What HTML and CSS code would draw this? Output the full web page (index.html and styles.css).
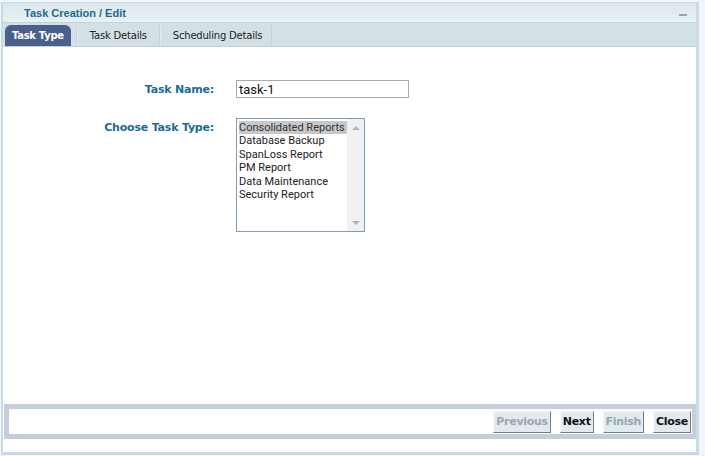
FILE: index.html
```html
<!DOCTYPE html>
<html lang="en">
<head>
    <meta charset="UTF-8">
    <title>Task Creation / Edit</title>
    <link rel="stylesheet" href="styles.css">
</head>
<body>
    <div class="panel">
        <div class="titleBar">
            <span class="titleText">Task Creation / Edit</span>
            <span class="minBtn"></span>
        </div>
        <div class="tabBar">
            <div class="tab active">Task Type</div>
            <div class="tab">Task Details</div>
            <div class="tab">Scheduling Details</div>
        </div>
        <div class="content">
            <div class="formRow">
                <label class="formLabel">Task Name:</label>
                <input class="taskName" type="text" value="task-1">
            </div>
            <div class="formRow">
                <label class="formLabel">Choose Task Type:</label>
                <div class="listBox">
                    <ul class="options">
                        <li class="selected">Consolidated Reports</li>
                        <li>Database Backup</li>
                        <li>SpanLoss Report</li>
                        <li>PM Report</li>
                        <li>Data Maintenance</li>
                        <li>Security Report</li>
                    </ul>
                    <div class="scrollBar">
                        <span class="arrowUp"></span>
                        <span class="arrowDown"></span>
                    </div>
                </div>
            </div>
        </div>
        <div class="footer">
            <div class="footerInner">
                <button class="btn disabled">Previous</button>
                <button class="btn">Next</button>
                <button class="btn disabled">Finish</button>
                <button class="btn">Close</button>
            </div>
        </div>
        <div class="bottomSpace"></div>
    </div>
</body>
</html>
```
FILE: styles.css
```css
body{
    margin: 0;
    background-color: #f3f6f8;
    font-family: "DejaVu Sans", Verdana, sans-serif;
}
.panel{
    width: 693px;
    margin: 2px 0 0 1px;
    background-color: #ffffff;
    border: 1px solid #c9dbe2;
    border-left-width: 2px;
    border-right-width: 3px;
    border-bottom-width: 3px;
}
.titleBar{
    height: 19px;
    display: flex;
    align-items: center;
    justify-content: space-between;
    padding: 0 9px 0 21px;
    background: linear-gradient(#dce8ee, #e8f0f3);
    border-bottom: 1px solid #c2d3da;
}
.titleText{
    font-family: "Liberation Sans", Arial, sans-serif;
    font-size: 11px;
    font-weight: bold;
    color: #1f6b8b;
}
.minBtn{
    width: 8px;
    height: 2px;
    margin-top: 4px;
    background-color: #9ea5aa;
}
.tabBar{
    height: 23px;
    display: flex;
    align-items: flex-end;
    padding-left: 2px;
    background-color: #d3e1e6;
    border-bottom: 1px solid #c2d3da;
}
.tab{
    height: 21px;
    line-height: 22px;
    padding: 0 12px 0 13px;
    font-family: "DejaVu Sans", Verdana, sans-serif;
    font-size: 10px;
    letter-spacing: -0.2px;
    color: #222;
    border-left: 1px solid #c4d3d9;
    box-shadow: inset 1px 0 0 #e2ecef;
}
.tab:last-child{
    padding-right: 9px;
    border-right: 1px solid #c4d3d9;
}
.tab.active{
    padding: 0 7px;
    margin-right: 5px;
    border: none;
    box-shadow: none;
    border-radius: 6px 6px 0 0;
    background-color: #4b5f8c;
    color: #fff;
    font-weight: bold;
    letter-spacing: -0.3px;
}
.content{
    height: 324px;
    padding-top: 33px;
}
.formRow{
    display: flex;
    align-items: flex-start;
    margin-bottom: 20px;
}
.formLabel{
    width: 211px;
    text-align: right;
    margin-right: 22px;
    padding-top: 3px;
    font-family: "DejaVu Sans", Verdana, sans-serif;
    font-size: 11px;
    font-weight: bold;
    letter-spacing: -0.2px;
    color: #1d6a96;
}
.taskName{
    width: 167px;
    height: 14px;
    margin: 0;
    padding: 1px 2px;
    border: 1px solid #a9a9a9;
    font-family: Roboto, Arial, sans-serif;
    font-size: 13px;
    color: #111;
    outline: none;
}
.listBox{
    width: 127px;
    height: 112px;
    display: flex;
    border: 1px solid #7f9db9;
}
.options{
    list-style: none;
    margin: 0;
    padding: 2px 0 0 2px;
    flex: 1;
    font-family: Roboto, Arial, sans-serif;
    font-size: 11px;
    line-height: 13.4px;
    color: #222;
}
.options li{
    white-space: nowrap;
}
.options li.selected{
    background-color: #c8c8c8;
    color: #333;
}
.scrollBar{
    width: 17px;
    display: flex;
    flex-direction: column;
    justify-content: space-between;
    align-items: center;
    padding: 7px 0 6px;
    background-color: #f1f1f1;
}
.arrowUp{
    border: 4px solid transparent;
    border-top: none;
    border-bottom: 4px solid #b4b4b4;
}
.arrowDown{
    border: 4px solid transparent;
    border-bottom: none;
    border-top: 4px solid #b4b4b4;
}
.footer{
    margin: 0 0 0 1px;
    border: 5px solid #c5cddf;
    border-right-width: 4px;
}
.footerInner{
    height: 25px;
    display: flex;
    justify-content: flex-end;
    align-items: center;
    gap: 9px;
    padding-right: 1px;
}
.btn{
    height: 22px;
    padding: 0 2px;
    font-family: "DejaVu Sans", Verdana, sans-serif;
    font-size: 11px;
    font-weight: bold;
    letter-spacing: -0.3px;
    color: #111;
    background-color: #e1eaee;
    border: 1px solid;
    border-color: #f4f8fa #7a7a7a #7a7a7a #f4f8fa;
    cursor: pointer;
}
.btn.disabled{
    color: #9aa6ab;
}
.bottomSpace{
    height: 13px;
}
```
